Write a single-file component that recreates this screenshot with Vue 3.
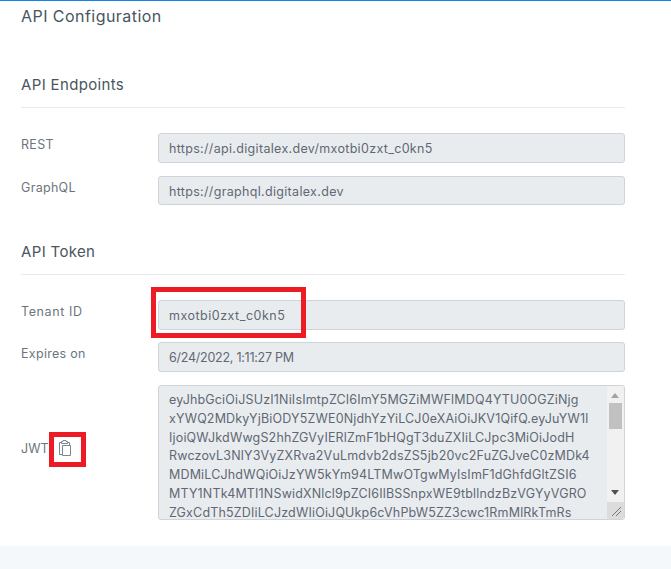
<script setup>
const lines = [
  'eyJhbGciOiJSUzI1NiIsImtpZCI6ImY5MGZiMWFlMDQ4YTU0OGZiNjg',
  'xYWQ2MDkyYjBiODY5ZWE0NjdhYzYiLCJ0eXAiOiJKV1QifQ.eyJuYW1l',
  'IjoiQWJkdWwgS2hhZGVyIERlZmF1bHQgT3duZXIiLCJpc3MiOiJodH',
  'RwczovL3NlY3VyZXRva2VuLmdvb2dsZS5jb20vc2FuZGJveC0zMDk4',
  'MDMiLCJhdWQiOiJzYW5kYm94LTMwOTgwMyIsImF1dGhfdGltZSI6',
  'MTY1NTk4MTI1NSwidXNlcl9pZCI6IlBSSnpxWE9tbllndzBzVGYyVGRO',
  'ZGxCdTh5ZDIiLCJzdWIiOiJQUkp6cVhPbW5ZZ3cwc1RmMlRkTmRs'
]
</script>

<template>
  <div class="page">
    <main class="card">
      <h1 class="title">API Configuration</h1>

      <section class="endpoints">
        <h2 class="heading">API Endpoints</h2>
        <div class="row">
          <label class="label">REST</label>
          <div class="input url">https://api.digitalex.dev/mxotbi0zxt_c0kn5</div>
        </div>
        <div class="row">
          <label class="label">GraphQL</label>
          <div class="input url">https://graphql.digitalex.dev</div>
        </div>
      </section>

      <section class="token">
        <h2 class="heading">API Token</h2>
        <div class="row tight">
          <label class="label tenant-label">Tenant ID</label>
          <div class="input tenant">mxotbi0zxt_c0kn5<span class="box tenant-box"></span></div>
        </div>
        <div class="row">
          <label class="label">Expires on</label>
          <div class="input date">6/24/2022, 1:11:27 PM</div>
        </div>
        <div class="row jwt-row">
          <div class="label jwt-label">
            JWT
            <span class="copy">
              <svg width="14" height="16" viewBox="0 0 14 16" fill="none" stroke="#7b858e" stroke-width="1">
                <path d="M3.5 2.5H1.5V14.5H4.5" />
                <path d="M9.5 2.5H11.5V5.5" />
                <path d="M3.5 3.5V1.5H5V.5H8V1.5H9.5V3.5Z" />
                <path d="M4.5 5.5H12.5V15.5H4.5Z" />
              </svg>
              <span class="box copy-box"></span>
            </span>
          </div>
          <div class="textarea">
            <div class="jwt-text">
              <div v-for="line in lines" :key="line">{{ line }}</div>
            </div>
            <div class="scrollbar">
              <span class="arrow up"></span>
              <span class="thumb"></span>
              <span class="arrow down"></span>
              <span class="corner">
                <svg width="16" height="16" viewBox="0 0 16 16" stroke="#777" stroke-width="1">
                  <path d="M5 14L14 5M9 14L14 9" />
                </svg>
              </span>
            </div>
          </div>
        </div>
      </section>
    </main>
  </div>
</template>

<style>
html, body { margin: 0; background: #fff; }
</style>

<style scoped>
.page {
  width: 671px;
  height: 569px;
  overflow: hidden;
  background: #f5f8fb;
  font-family: "Inter", "Liberation Sans", sans-serif;
  color: #5a6570;
}
.card {
  height: 546px;
  box-sizing: border-box;
  background: #fff;
  border-top: 1px solid #1a7fe8;
  padding: 0 46px 0 21px;
}
.title {
  margin: 0;
  padding-top: 6px;
  padding-bottom: 1px;
  font-size: 16px;
  line-height: 18px;
  letter-spacing: .45px;
  font-weight: 400;
  color: #4a5560;
}
.endpoints { padding-top: 50px; }
.token { padding-top: 25px; }
.heading {
  margin: 0 0 25px;
  padding-bottom: 13px;
  border-bottom: 1px solid #e9ecef;
  font-size: 15px;
  line-height: 18px;
  letter-spacing: .35px;
  font-weight: 400;
  color: #4a5560;
}
.row {
  display: grid;
  grid-template-columns: 137px 1fr;
  margin-bottom: 12.75px;
}
.tight { margin-bottom: 12.25px; }
.label {
  padding-top: 2px;
  font-size: 12.5px;
  line-height: 19px;
  letter-spacing: .3px;
  color: #6c757d;
}
.tenant-label { letter-spacing: .6px; }
.input {
  position: relative;
  height: 29.75px;
  box-sizing: border-box;
  padding: 0 10px;
  background: #e9ecef;
  border: 1px solid #ced4da;
  border-radius: 3px;
  font-size: 12.5px;
  line-height: 29px;
  color: #5f6873;
}
.url { letter-spacing: .32px; }
.tenant { letter-spacing: .5px; }
.date { letter-spacing: -.25px; }
.box {
  position: absolute;
  box-sizing: border-box;
  border: 5px solid #ed1c24;
}
.tenant-box {
  left: -8px;
  top: -14px;
  width: 155px;
  height: 51px;
}
.jwt-row { margin-bottom: 0; }
.jwt-label {
  display: flex;
  align-items: center;
  gap: 3px;
  padding: 0 0 8px;
  letter-spacing: 0;
}
.copy {
  position: relative;
  display: inline-flex;
  margin-left: 6px;
  margin-top: -1px;
}
.copy-box {
  left: -9px;
  top: -8px;
  width: 37px;
  height: 35px;
}
.textarea {
  display: flex;
  height: 134.5px;
  margin-top: .5px;
  box-sizing: border-box;
  background: #e9ecef;
  border: 1px solid #ced4da;
  border-radius: 3px;
  overflow: hidden;
}
.jwt-text {
  flex: 1;
  min-width: 0;
  padding: 5px 0 0 10px;
  font-size: 12.5px;
  line-height: 18.75px;
  letter-spacing: .17px;
  color: #5f6873;
  white-space: nowrap;
  overflow: hidden;
}
.scrollbar {
  position: relative;
  width: 17px;
  background: #f1f1f1;
  flex-shrink: 0;
}
.arrow {
  position: absolute;
  left: 4px;
  width: 0;
  height: 0;
  border-left: 4px solid transparent;
  border-right: 4px solid transparent;
}
.up { top: 7px; border-bottom: 5px solid #a3a3a3; }
.down { top: 104px; border-top: 5px solid #505050; }
.thumb {
  position: absolute;
  top: 17px;
  left: 2px;
  width: 13px;
  height: 26px;
  background: #c1c1c1;
}
.corner {
  position: absolute;
  right: 0;
  bottom: 0;
  width: 17px;
  height: 17px;
  background: #dcdcdc;
}
</style>
